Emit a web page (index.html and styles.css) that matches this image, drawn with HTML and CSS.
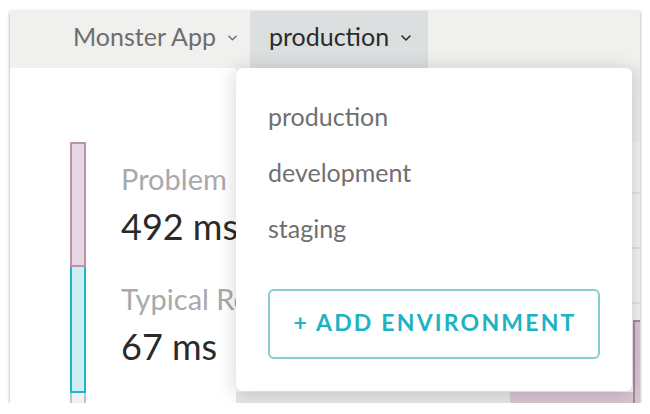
FILE: index.html
```html
<!DOCTYPE html>
<html>
<head>
<meta charset="utf-8">
<link rel="stylesheet" href="styles.css">
</head>
<body>
<div class="window">
  <header class="topbar">
    <div class="nav-item">
      <span>Monster App</span>
      <svg class="chev" viewBox="0 0 10 6" width="9" height="6"><polyline points="1,1 5,5 9,1" fill="none" stroke="currentColor" stroke-width="1.5" stroke-linecap="round" stroke-linejoin="round"/></svg>
    </div>
    <div class="nav-item active">
      <span>production</span>
      <svg class="chev" viewBox="0 0 10 6" width="10" height="6"><polyline points="1,1 5,5 9,1" fill="none" stroke="currentColor" stroke-width="1.6" stroke-linecap="round" stroke-linejoin="round"/></svg>
    </div>
  </header>
  <main class="content">
    <div class="legend-bar">
      <div class="seg seg-problem"></div>
      <div class="seg seg-typical"></div>
      <div class="seg seg-rest"></div>
    </div>
    <div class="metrics">
      <div class="metric">
        <div class="metric-label">Problem Requests</div>
        <div class="metric-value">492 ms</div>
      </div>
      <div class="metric">
        <div class="metric-label">Typical Requests</div>
        <div class="metric-value">67 ms</div>
      </div>
    </div>
    <div class="chart">
      <div class="chart-head"></div>
      <div class="chart-plot">
        <div class="bars">
          <div class="bar bar-gray"></div>
          <div class="bar-group">
            <div class="bar bar-pink-low"></div>
            <div class="bar bar-pink-tall"></div>
          </div>
        </div>
      </div>
    </div>
  </main>
  <div class="dropdown">
    <ul class="env-list">
      <li>production</li>
      <li>development</li>
      <li>staging</li>
    </ul>
    <button class="add-btn">+ ADD ENVIRONMENT</button>
  </div>
</div>
</body>
</html>
```

FILE: styles.css
```css
* { box-sizing: border-box; }
html, body { margin: 0; padding: 0; background: #ffffff; }
body { font-family: Lato, "Noto Sans", sans-serif; }

.window {
  position: relative;
  margin: 11px 0 0 10px;
  width: 630px;
  height: 392px;
  background: #fff;
  overflow: hidden;
  box-shadow: 0 1px 3px rgba(0,0,0,0.4);
}

.topbar {
  display: flex;
  height: 57px;
  background: #f0f0ee;
  padding-left: 44px;
}
.nav-item {
  display: flex;
  align-items: center;
  height: 57px;
  padding: 0 13px 6px 19px;
  font-size: 25px;
  line-height: 51px;
  color: #6d6d6d;
}
.nav-item .chev { margin-left: 12px; margin-top: 2px; }
.nav-item.active {
  background: #dcdfe0;
  color: #2b2b2b;
  padding-right: 17px;
}

.content {
  display: flex;
  height: 335px;
}
.legend-bar {
  display: flex;
  flex-direction: column;
  flex-shrink: 0;
  width: 16px;
  margin: 74px 0 0 60px;
}
.seg { border: 2px solid; border-bottom: none; }
.seg-problem { height: 125px; background: #e8d6e3; border-color: #b994ab; border-bottom: 2px solid #b994ab; }
.seg-typical { height: 126px; background: #cdeef2; border-color: #1fb6c9; border-top: none; border-bottom: 2px solid #1fb6c9; }
.seg-rest { flex: 1; background: #eef2f5; border-color: #bfc3c6; border-top: none; }

.metrics {
  display: flex;
  flex-direction: column;
  flex: 1;
  min-width: 0;
  margin: 95px 0 0 35px;
  white-space: nowrap;
}
.metric { height: 125px; }
.metric-label {
  font-size: 29px;
  line-height: 32px;
  color: #a9a9a9;
}
.metric-value {
  margin-top: 11px;
  font-size: 36px;
  line-height: 40px;
  color: #2a2a2a;
}

.chart {
  display: flex;
  flex-direction: column;
  width: 404px;
  flex-shrink: 0;
}
.chart-head { height: 74px; background: #ececec; }
.chart-plot {
  flex: 1;
  display: flex;
  flex-direction: column;
  justify-content: flex-end;
  background-color: #f3f3f3;
  background-image: repeating-linear-gradient(to bottom, transparent 0, transparent 50px, #dde3e8 50px, #dde3e8 52px, transparent 52px, transparent 55px);
}
.bars { display: flex; align-items: flex-end; }
.bar-gray { flex: 1; height: 11px; background: #e6e6e6; }
.bar-group { display: flex; align-items: flex-end; width: 130px; }
.bar-pink-low { flex: 1; height: 11px; background: #d8c5d1; }
.bar-pink-tall { width: 7px; height: 83px; background: #d8c5d1; border-top: 2px solid #a88b9e; border-left: 2px solid #a88b9e; }

.dropdown {
  position: absolute;
  left: 226px;
  top: 57px;
  width: 396px;
  height: 323px;
  background: #fff;
  border-radius: 6px;
  box-shadow: 0 2px 20px rgba(0,0,0,0.18);
  padding: 20px 32px 32px;
  display: flex;
  flex-direction: column;
}
.env-list {
  list-style: none;
  margin: 0;
  padding: 0;
}
.env-list li {
  height: 56px;
  font-size: 25px;
  line-height: 56px;
  color: #707070;
}
.add-btn {
  margin-top: auto;
  height: 70px;
  width: 100%;
  background: #fff;
  border: 2px solid #86cdd0;
  border-radius: 6px;
  font-family: Lato, "Noto Sans", sans-serif;
  font-size: 23px;
  font-weight: 700;
  letter-spacing: 2.2px;
  color: #1eb2c5;
  padding: 0 0 4px 2px;
}
```
